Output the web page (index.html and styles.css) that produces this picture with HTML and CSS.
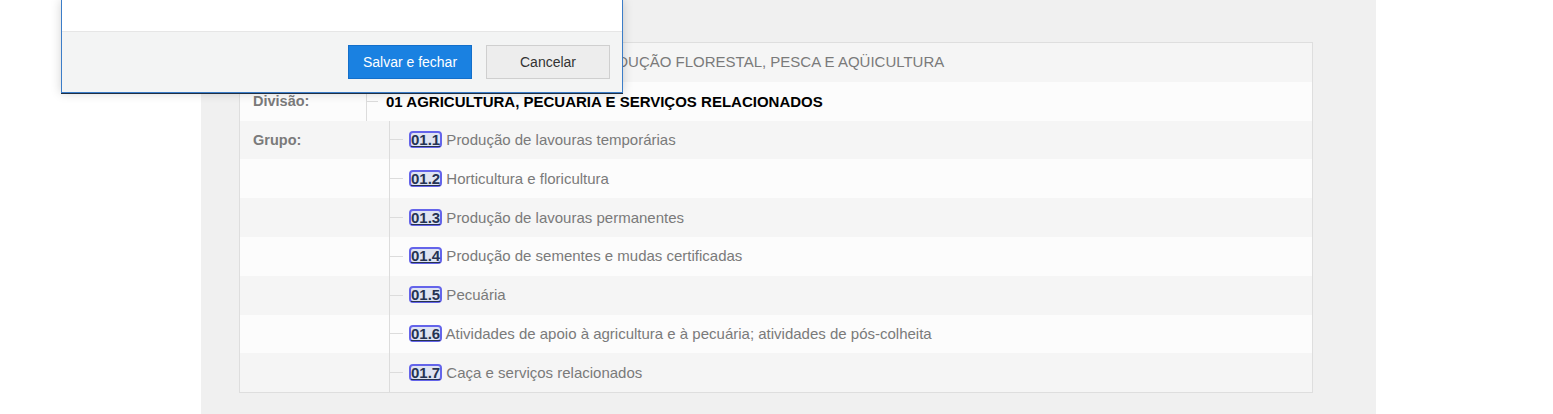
FILE: index.html
```html
<!DOCTYPE html>
<html lang="pt-BR">
<head>
<meta charset="utf-8">
<title>CNAE</title>
<link rel="stylesheet" href="styles.css">
</head>
<body>
<div class="panel">
  <div class="table">
    <div class="row">
      <div class="label">Seção:</div>
      <div class="value plain"><span class="text">AGRICULTURA, PECUÁRIA, PRODUÇÃO FLORESTAL, PESCA E AQÜICULTURA</span></div>
    </div>
    <div class="row">
      <div class="label">Divisão:</div>
      <div class="value tree1"><span class="branch b1"></span><strong class="div-name">01 AGRICULTURA, PECUARIA E SERVIÇOS RELACIONADOS</strong></div>
    </div>
    <div class="row">
      <div class="label">Grupo:</div>
      <div class="value tree2"><span class="branch b2"></span><span class="text"><a class="code" href="#">01.1</a> Produção de lavouras temporárias</span></div>
    </div>
    <div class="row">
      <div class="label"></div>
      <div class="value tree2"><span class="branch b2"></span><span class="text"><a class="code" href="#">01.2</a> Horticultura e floricultura</span></div>
    </div>
    <div class="row">
      <div class="label"></div>
      <div class="value tree2"><span class="branch b2"></span><span class="text"><a class="code" href="#">01.3</a> Produção de lavouras permanentes</span></div>
    </div>
    <div class="row">
      <div class="label"></div>
      <div class="value tree2"><span class="branch b2"></span><span class="text"><a class="code" href="#">01.4</a> Produção de sementes e mudas certificadas</span></div>
    </div>
    <div class="row">
      <div class="label"></div>
      <div class="value tree2"><span class="branch b2"></span><span class="text"><a class="code" href="#">01.5</a> Pecuária</span></div>
    </div>
    <div class="row">
      <div class="label"></div>
      <div class="value tree2"><span class="branch b2"></span><span class="text"><a class="code" href="#">01.6</a> Atividades de apoio à agricultura e à pecuária; atividades de pós-colheita</span></div>
    </div>
    <div class="row">
      <div class="label"></div>
      <div class="value tree2"><span class="branch b2"></span><span class="text"><a class="code" href="#">01.7</a> Caça e serviços relacionados</span></div>
    </div>
  </div>
</div>

<div class="dialog">
  <div class="dialog-body"></div>
  <div class="dialog-footer">
    <button class="btn btn-primary" type="button">Salvar e fechar</button>
    <button class="btn btn-default" type="button">Cancelar</button>
  </div>
</div>
</body>
</html>
```

FILE: styles.css
```css
html, body {
  margin: 0;
  padding: 0;
  background: #ffffff;
  font-family: "Liberation Sans", Arial, sans-serif;
}

body {
  width: 1553px;
  height: 414px;
  overflow: hidden;
  position: relative;
}

.panel {
  margin-left: 201px;
  width: 1175px;
  height: 414px;
  background: #f0f0f0;
  padding: 42px 0 0 38px;
  box-sizing: border-box;
}

.table {
  width: 1074px;
  border: 1px solid #dedede;
  box-sizing: border-box;
  display: flex;
  flex-direction: column;
}

.row {
  display: flex;
  height: 38.8px;
  background: #fcfcfc;
}

.row:nth-child(odd) {
  background: #f5f5f5;
}

.label {
  width: 126px;
  flex: none;
  box-sizing: border-box;
  padding-left: 13px;
  display: flex;
  align-items: center;
  font-size: 14.5px;
  font-weight: bold;
  color: #7a7a7a;
}

.value {
  flex: 1;
  display: flex;
  align-items: center;
  font-size: 15px;
  color: #7a7a7a;
  white-space: nowrap;
}

.text {
  line-height: 18px;
}

.plain {
  padding-left: 19px;
}

.tree1 {
  border-left: 1px solid #dcdcdc;
}

.tree2 {
  margin-left: 23px;
  border-left: 1px solid #dcdcdc;
}

.branch {
  display: block;
  height: 1px;
  background: #dcdcdc;
  flex: none;
}

.b1 {
  width: 11px;
  margin-right: 8px;
}

.b2 {
  width: 13px;
  margin-right: 6px;
}

.div-name {
  color: #000000;
  font-weight: bold;
  font-size: 15px;
}

.code {
  display: inline-block;
  vertical-align: baseline;
  border: 2px solid #6464ea;
  border-radius: 4px;
  background: #dfe4f2;
  color: #263352;
  font-weight: bold;
  font-size: 15px;
  line-height: 13px;
  padding: 0;
  text-decoration: underline;
}

/* dialog overlay */
.dialog {
  position: absolute;
  left: 61px;
  top: 0;
  width: 562px;
  box-sizing: border-box;
  border: 1px solid #3b7dc8;
  border-top: none;
  background: #ffffff;
  box-shadow: 0 1px 0 #1d2e44, 0 0 10px rgba(0, 0, 0, 0.18);
}

.dialog-body {
  height: 31px;
  background: #ffffff;
  border-bottom: 1px solid #e6e6e6;
}

.dialog-footer {
  height: 60px;
  background: #f3f4f4;
  display: flex;
  justify-content: flex-end;
  align-items: center;
  gap: 14px;
  padding-right: 12px;
}

.btn {
  width: 124px;
  height: 34px;
  box-sizing: border-box;
  font-family: "Liberation Sans", Arial, sans-serif;
  font-size: 14px;
  padding: 0;
  margin: 0;
  border-radius: 0;
  cursor: pointer;
}

.btn-primary {
  background: #1a81e1;
  border: 1px solid #136fca;
  color: #ffffff;
}

.btn-default {
  background: #ededed;
  border: 1px solid #cfcfcf;
  color: #333333;
}
```
